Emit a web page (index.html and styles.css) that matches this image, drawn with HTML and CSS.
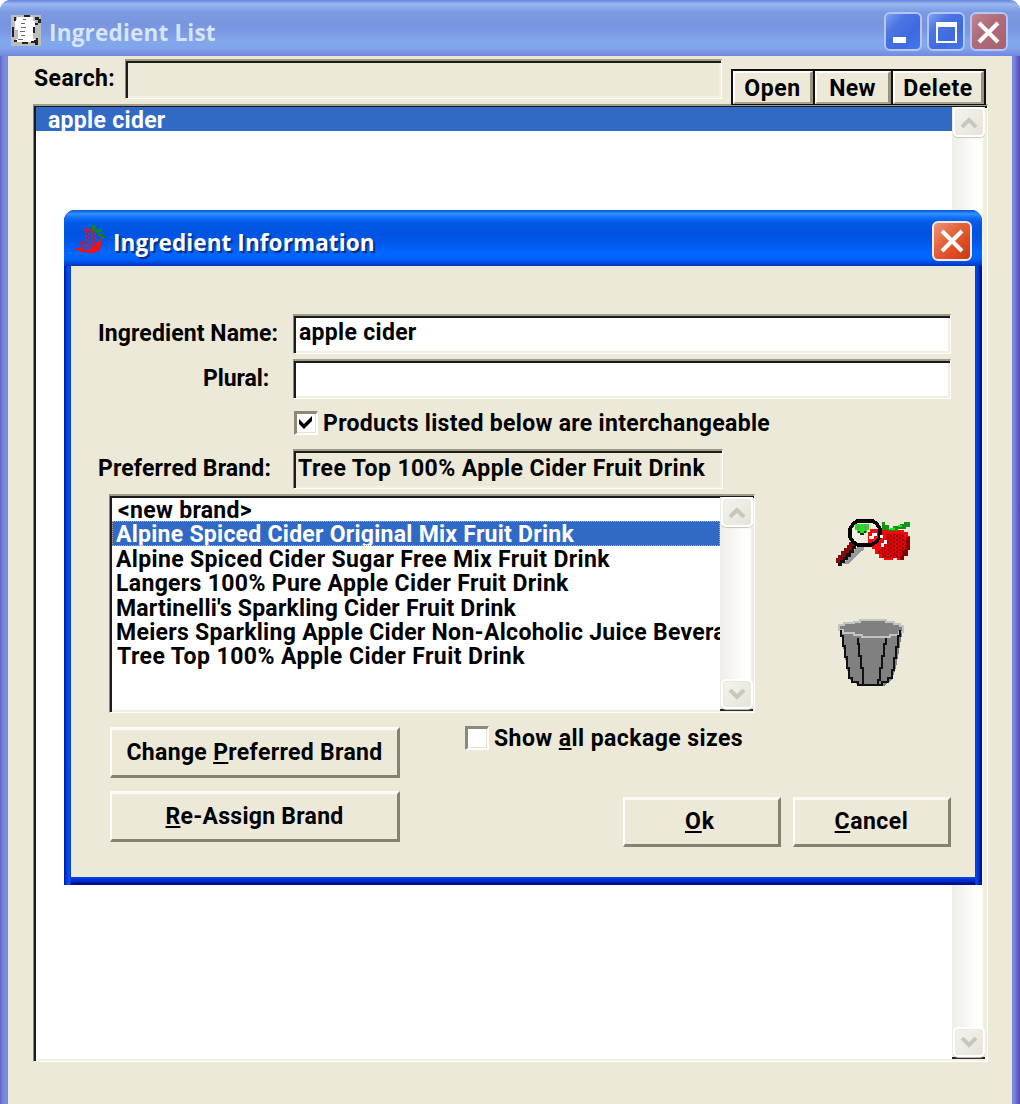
FILE: index.html
```html
<!DOCTYPE html>
<html lang="en">
<head>
<meta charset="utf-8">
<title>Ingredient List</title>
<link rel="stylesheet" href="styles.css">
</head>
<body>
<main class="window">
  <header class="titlebar">
    <svg class="list-icon" width="30" height="31" viewBox="0 0 30 31" shape-rendering="crispEdges">
      <path fill="#bdbdbd" d="M0 0h30v31H0z"/>
      <path fill="#fff" d="M6 2h16v4h2v9h-2v9h2v3H5v-3h2v-9H4V5h2z"/>
      <path fill="#222" d="M3 2h2v4H3zM13 0h6v2h-6zM24 2h4v2h2v4h-3v2h-3V8h3V5h-3zM1 12h2v10H1zM22 12h2v6h-2zM3 25h3v2H3zM11 27h6v2h-6zM20 26h3v-1h2v-2h2v7h-3v-2h-4z"/>
      <path stroke="#666" stroke-width="1.500" d="M12 4.500h3M10 8.500h4M10 12.500h5M9 16.500h5M10 20.500h4M7 24.500h5"/>
    </svg>
    <h1 class="title">Ingredient List</h1>
    <div class="controls">
      <button class="control blue" aria-label="Minimize"><svg width="34" height="34"><path fill="#fff" d="M7 22h13v6H7z"/></svg></button>
      <button class="control blue" aria-label="Maximize"><svg width="34" height="34"><path fill="none" stroke="#fff" stroke-width="2" d="M8 8h19v19H8z"/><path fill="#fff" d="M7 7h21v5H7z"/></svg></button>
      <button class="control rose" aria-label="Close"><svg width="34" height="34"><path stroke="#fff" stroke-width="4" d="M7 8l19 19M26 8L7 27"/></svg></button>
    </div>
  </header>

  <section class="client">
    <div class="toolbar">
      <label class="search-label">Search:</label>
      <div class="sunken search"></div>
      <div class="tools">
        <button class="tool open">Open</button>
        <button class="tool new">New</button>
        <button class="tool delete">Delete</button>
      </div>
    </div>
    <div class="sunken main-list">
      <div class="items"><div class="main-item">apple cider</div></div>
      <div class="scrollbar">
        <span class="arrow"><svg width="18" height="11"><path d="M2 10l7-7 7 7"/></svg></span>
        <span class="arrow"><svg width="18" height="11"><path d="M2 1l7 7 7-7"/></svg></span>
      </div>
    </div>
  </section>

  <section class="dialog">
    <header class="dialog-titlebar">
      <svg class="berry-icon" width="30" height="31" viewBox="0 0 30 31" shape-rendering="crispEdges">
        <defs><pattern id="dots" width="6" height="4" patternUnits="userSpaceOnUse"><path fill="#f01010" d="M0 0h2v2H0zM3 2h2v2H3z"/></pattern></defs>
        <path fill="url(#dots)" d="M8 6h10l4 5v7l-6 6-8 1-4-2v-7l4-1z"/>
        <path fill="#f01010" d="M8 4h7v2H8zM23 13h3v9h-2v4h-4v2h-9v-1H4v-2H0v-2h8v2h5v-2h2v-3h5v-3h3zM3 17h2v2H3z"/>
        <path fill="#138324" d="M16 0h4v4h3V3h3v4h-2v2h3v2h2v2h-4v-2h-3V8h-3V6h-3z"/>
      </svg>
      <h2 class="title active">Ingredient Information</h2>
      <button class="control red" aria-label="Close"><svg width="36" height="36"><path stroke="#fff" stroke-width="4" d="M8 8l20 20M28 8L8 28"/></svg></button>
    </header>

    <div class="dialog-body">
      <div class="field-row">
        <label class="name-label">Ingredient Name:</label>
        <div class="sunken field white name-field">apple cider</div>
      </div>
      <div class="field-row">
        <label class="plural-label">Plural:</label>
        <div class="sunken field white"></div>
      </div>
      <div class="check-row">
        <span class="checkbox"><svg width="20" height="20"><path fill="#000" d="M2 5l5 5 8-8v5l-8 8-5-5z"/></svg></span>
        <label class="products-label">Products listed below are interchangeable</label>
      </div>
      <div class="field-row">
        <label class="preferred-label">Preferred Brand:</label>
        <div class="sunken field brand-field">Tree Top 100% Apple Cider Fruit Drink</div>
      </div>

      <div class="brands">
        <div class="sunken brand-list">
          <ul class="items">
            <li class="b-new">&lt;new brand&gt;</li>
            <li class="selected b-original">Alpine Spiced Cider Original Mix Fruit Drink</li>
            <li class="b-sugar">Alpine Spiced Cider Sugar Free Mix Fruit Drink</li>
            <li class="b-langers">Langers 100% Pure Apple Cider Fruit Drink</li>
            <li class="b-martinelli">Martinelli's Sparkling Cider Fruit Drink</li>
            <li class="b-meiers">Meiers Sparkling Apple Cider Non-Alcoholic Juice Beverage</li>
            <li class="b-tree">Tree Top 100% Apple Cider Fruit Drink</li>
          </ul>
          <div class="scrollbar">
            <span class="arrow"><svg width="18" height="11"><path d="M2 10l7-7 7 7"/></svg></span>
            <span class="arrow"><svg width="18" height="11"><path d="M2 1l7 7 7-7"/></svg></span>
          </div>
        </div>
        <div class="pictures">
          <svg width="76" height="50" viewBox="0 0 76 50" shape-rendering="crispEdges">
            <defs><pattern id="weave" width="6" height="4" patternUnits="userSpaceOnUse"><path fill="#d80808" d="M0 0h6v4H0z"/><path fill="#a00404" d="M0 2h2v2H0zM3 0h2v2H3z"/></pattern></defs>
            <path fill="#f80808" d="M36 15h8v-2h24v2h4v4h2v14h-2v6h-4v4h-7v-2h-4v2h-9v-2h-5v-4h-4v-5h-3z"/>
            <path fill="url(#weave)" d="M50 17h18v5h4v11h-2v6h-4v2H46v-4h-4v-4h4v-6h4z"/>
            <path fill="#8d0000" d="M70 20h4v13h-2v6h-4v4h-4v-4h2v-6h4z"/>
            <path fill="#109418" d="M46 5h3v3h4v5h-7zM52 12h5v-3h7V7h4V5h6v5h-4v2h-8v2H52z"/>
            <path fill="#20e020" d="M54 11h5v2h-5zM62 8h4v2h-4z"/>
            <path fill="#999" d="M22 29h6v4l-4 2-4 4-4 4-4 4H7l11-14z"/>
            <path fill="#111" d="M13 27h7v5h-2v4h-3v4h-3v3H9v3H6v3H2v-3h2v-4h3v-4h3v-4h3z"/>
            <path fill="#850b0b" d="M13 25h5v4h-2v4h-3v3h-3v4H7v3H4v3H0v-5h2v-3h3v-4h3v-3h3v-3h2z"/>
            <path fill="#f1eddd" stroke="#000" stroke-width="3.500" d="M21 4h16l4 3 3 5v8l-4 5-5 3H22l-5-3-3-5v-8l3-5z"/>
            <path fill="#20e020" d="M19 7h14v6h-2v3h-3v2h-4v-2h-3v-3h-2z"/>
            <path fill="#888" d="M21 9h3v3h-3zM28 9h3v3h-3z"/>
            <path fill="#153015" d="M22 14h2v2h4v-2h2v2h-2v2h-4v-2h-2z"/>
            <path fill="#f80808" d="M34 12h8v8l-3 4-4 2h-3V15h2z"/>
            <path fill="#fff" d="M36 16h5v3h-3v3h-5v-3h3zM45 26h3v-3h3v4h-3v3h-3zM44 18h3v3h-3z"/>
          </svg>
          <svg class="trash" width="68" height="69" viewBox="0 0 68 69" shape-rendering="crispEdges">
            <path fill="#808080" d="M2 9h63l-7 40-4 12-8 6H22l-10-6-3-11z"/>
            <path fill="#808080" stroke="#c3c3c3" stroke-width="2" d="M16 3h6V1h26v2h8v2h6v2h3v6h-4v3h-9v2H24v-2h-8v-2H5v-3H1V6h5V4h10z"/>
            <path fill="none" stroke="#111" stroke-width="2" d="M3 11v6h2v10h2v11h2v11h2v10h3v4h6v3h24v-3h6v-4h4v-8h2V39h2V28h2V17h2v-6M20 19v6h1v12h2v12h2v17M48 19v6h-2v12h-2v12h-2v12h-2v5"/>
          </svg>
        </div>
      </div>

      <div class="actions">
        <div class="brand-actions">
          <button class="push change"><span>Change <u>P</u>referred Brand</span></button>
          <button class="push assign"><span><u>R</u>e-Assign Brand</span></button>
        </div>
        <div class="final-actions">
          <div class="check-row package">
            <span class="checkbox"></span>
            <label class="package-label">Show <u>a</u>ll package sizes</label>
          </div>
          <div class="ok-row">
            <button class="push ok"><span><u>O</u>k</span></button>
            <button class="push cancel"><span><u>C</u>ancel</span></button>
          </div>
        </div>
      </div>
    </div>
  </section>
</main>
</body>
</html>
```
FILE: styles.css
```css
* { box-sizing: border-box; }

body {
  margin: 0;
  background: #fff;
  color: #000;
  font: 700 23px/24px Roboto, "Liberation Sans", sans-serif;
  letter-spacing: .3px;
  overflow: hidden;
}

h1, h2, ul { margin: 0; padding: 0; }
ul { list-style: none; }

button {
  margin: 0;
  padding: 0;
  border: 0;
  color: inherit;
  font: inherit;
  letter-spacing: inherit;
}

label, li, .title, .main-item, .field, .tool, .push { white-space: nowrap; }

u {
  text-decoration-thickness: 2px;
  text-underline-offset: 2px;
  text-decoration-skip-ink: none;
}

/* Main window */
.window {
  position: relative;
  height: 1104px;
  border-radius: 11px 11px 0 0;
  background: linear-gradient(90deg, #6361c5 0, #6f7fda 2px, #7b90e2 6px, #7587dc 8px, #7587dc 1012px, #7b8ade 1014px, #6765c9 1017px, #514ba8 1020px);
  overflow: hidden;
}

.titlebar {
  display: flex;
  height: 56px;
  padding: 15px 12px 0 11px;
  background: linear-gradient(#6581df 0, #7e9fe9 2px, #9bbaf0 4px, #8dacec 7px, #7c9ae2 12px, #7995df 24px, #7b99e3 32px, #82a7eb 41px, #81a5ec 48px, #7891e4 53px, #7388dc 56px);
}

.title {
  font: 700 22.500px/28px "Open Sans", "Noto Sans", sans-serif;
  letter-spacing: .1px;
  color: #d8e4f8;
}

.titlebar .title { margin: 4px 0 0 8px; letter-spacing: .2px; }

.controls {
  display: flex;
  gap: 5px;
  margin: -3px 0 0 auto;
}

.control {
  display: grid;
  place-items: center;
  width: 38px;
  height: 39px;
  border: 2px solid #b3c6f5;
  border-radius: 6px;
}

.blue { background: linear-gradient(135deg, #7da0f2 0, #4c75e4 30%, #3d6ae0 65%, #4379ed 100%); }
.rose { background: linear-gradient(135deg, #c08591 0, #b06c7c 40%, #a9606e 100%); }
.red { background: linear-gradient(135deg, #ee947b 0, #e4653f 38%, #df4a20 70%, #c33b15 100%); }

.client {
  height: 1048px;
  margin: 0 8px;
  padding: 3px 24px 0 25px;
  background: #ece9d8;
}

.toolbar {
  display: flex;
  height: 45px;
}

.search-label {
  width: 92px;
  padding-left: 1px;
  line-height: 40px;
  letter-spacing: .4px;
}

.sunken {
  border: 1px solid #fffffb;
  border-top: 2px solid #a09d8d;
  border-left-color: #8b897c;
  box-shadow: inset 2px 2px #1b1b1a, inset -2px -2px #f2efe2;
}

.search { width: 597px; height: 40px; }

.tools {
  display: flex;
  height: 36px;
  margin: 10px 0 0 9px;
  background: #111;
  padding: 2px 2px 0;
  gap: 2px;
}

.tool {
  height: 33px;
  border: 2px solid #fffffb;
  border-right: 3px solid #96937f;
  border-bottom: 2px solid #a5a28f;
  background: #ece9d8;
  line-height: 31px;
}

.open { width: 80px; letter-spacing: .6px; }
.new { width: 76px; }
.delete { width: 91px; letter-spacing: .6px; }

.main-list {
  display: flex;
  width: 955px;
  height: 958px;
  padding: 1px 2px 2px 2px;
  background: #fff;
}

.items { flex: 1; min-width: 0; overflow: hidden; }

.main-item {
  height: 24px;
  padding: 3px 0 0 12px;
  background: #316ac5;
  color: #fff;
  line-height: 21px;
}

/* Scrollbars */
.scrollbar {
  display: flex;
  flex-direction: column;
  justify-content: space-between;
  width: 33px;
  padding-left: 1px;
  border-bottom: 2px solid #222;
  background: linear-gradient(90deg, #efeee8 0, #f4f3ee 30%, #fdfdfa 65%, #fefefb 30px, #eeece1 32px);
}

.arrow {
  display: grid;
  place-items: center;
  height: 30px;
  border: 2px solid #fff;
  border-radius: 5px;
  background: linear-gradient(135deg, #f5f4ed, #e5e3d9);
  box-shadow: inset 0 0 0 1px #eae8dd, 0 1px 1px #c9c6b7;
}

.arrow path {
  fill: none;
  stroke: #c9c7bd;
  stroke-width: 4;
}

/* Ingredient dialog */
.dialog {
  position: absolute;
  left: 64px;
  top: 210px;
  width: 918px;
  height: 675px;
  padding: 0 7px 8px;
  border-radius: 11px 11px 0 0;
  background: linear-gradient(90deg, #0016b0 0, #0034d8 2px, #0c54ed 5px, #003cc8 7px, #003cc8 911px, #0048ed 913px, #0022ba 915px, #00108c 918px);
  overflow: hidden;
}

.dialog-titlebar {
  display: flex;
  height: 56px;
  margin: 0 -7px;
  padding: 15px 10px 0 12px;
  background: linear-gradient(#0750d2 0, #1b76f2 2px, #3590ff 4px, #1474fa 7px, #005be9 12px, #0053df 22px, #0058eb 33px, #0066ff 42px, #0064fc 49px, #0048dd 53px, #0036bd 56px);
}

.active {
  color: #fff;
  text-shadow: 2px 2px 1px #0b2c87;
}

.dialog-titlebar .title { margin: 4px auto 0 7px; }
.dialog-titlebar .control { width: 40px; height: 40px; margin-top: -4px; border-color: #f5e9ea; }

.dialog-body {
  height: 611px;
  padding: 48px 24px 0 27px;
  background: #ece9d8;
  box-shadow: 0 2px #0140e2, 0 5px #002dca, 0 8px #000f99;
}

.field-row {
  display: grid;
  grid-template-columns: 195px auto;
  height: 39px;
  margin-bottom: 6px;
  line-height: 40px;
}

.field { padding-left: 5px; line-height: 33px; }
.white { background: #fff; }
.name-label { letter-spacing: .1px; }
.plural-label { padding-left: 105px; letter-spacing: -.1px; }
.preferred-label { letter-spacing: .13px; }
.brand-field { width: 430px; height: 40px; padding-left: 4px; line-height: 35px; letter-spacing: .42px; }

.check-row {
  display: flex;
  height: 24px;
  margin: 13px 0 14px 196px;
  line-height: 26px;
}

.checkbox {
  width: 24px;
  height: 24px;
  margin-right: 5px;
  border: 2px solid #fffffb;
  border-top: 3px solid #8c8979;
  border-left: 3px solid #8c8979;
  background: #fff;
  box-shadow: inset -1px -1px #e5e2d2;
}

.checkbox svg { display: block; }
.products-label { letter-spacing: .31px; }

.brands { display: flex; margin-left: 11px; }

.brand-list {
  display: flex;
  width: 646px;
  height: 219px;
  padding: 1px 1px 1px 2px;
  background: #fff;
}

.brand-list li { height: 24.400px; padding: 3px 0 0 4px; line-height: 21.400px; }

.brand-list .selected {
  outline: 1px dotted #dca04e;
  outline-offset: -1px;
  background: #316ac5;
  color: #fff;
}

.brand-list .b-new { padding-left: 6px; letter-spacing: .3px; }
.b-original { letter-spacing: .26px; }
.b-sugar { letter-spacing: .35px; }
.b-langers { letter-spacing: .33px; }
.b-martinelli { letter-spacing: .21px; }
.b-meiers { letter-spacing: .3px; }
.brand-list .b-tree { padding-left: 5px; letter-spacing: .44px; }

.pictures {
  display: flex;
  flex-direction: column;
  gap: 52px;
  padding: 23px 0 0 81px;
}

.trash { margin-left: 2px; }

.actions { display: flex; margin: 14px 0 0 12px; }

.brand-actions { display: grid; gap: 13px; align-content: start; }

.push {
  width: 290px;
  height: 51px;
  border: 2px solid #fffffb;
  border-top: 3px solid #fcfbf3;
  border-right: 3px solid #858270;
  border-bottom: 3px solid #858270;
  background: #ece9d8;
  line-height: 45px;
}

.push span { display: block; height: 45px; }
.change { letter-spacing: .33px; }
.assign { letter-spacing: .27px; }

.final-actions { width: 486px; margin-left: 65px; }
.package { margin: -1px 0 47px; }
.package-label { letter-spacing: .43px; }

.ok-row {
  display: flex;
  gap: 12px;
  justify-content: flex-end;
}

.ok-row .push { width: 158px; height: 50px; line-height: 44px; }
.ok { padding-right: 3px; letter-spacing: 1px; }
.cancel { letter-spacing: .5px; }
```
